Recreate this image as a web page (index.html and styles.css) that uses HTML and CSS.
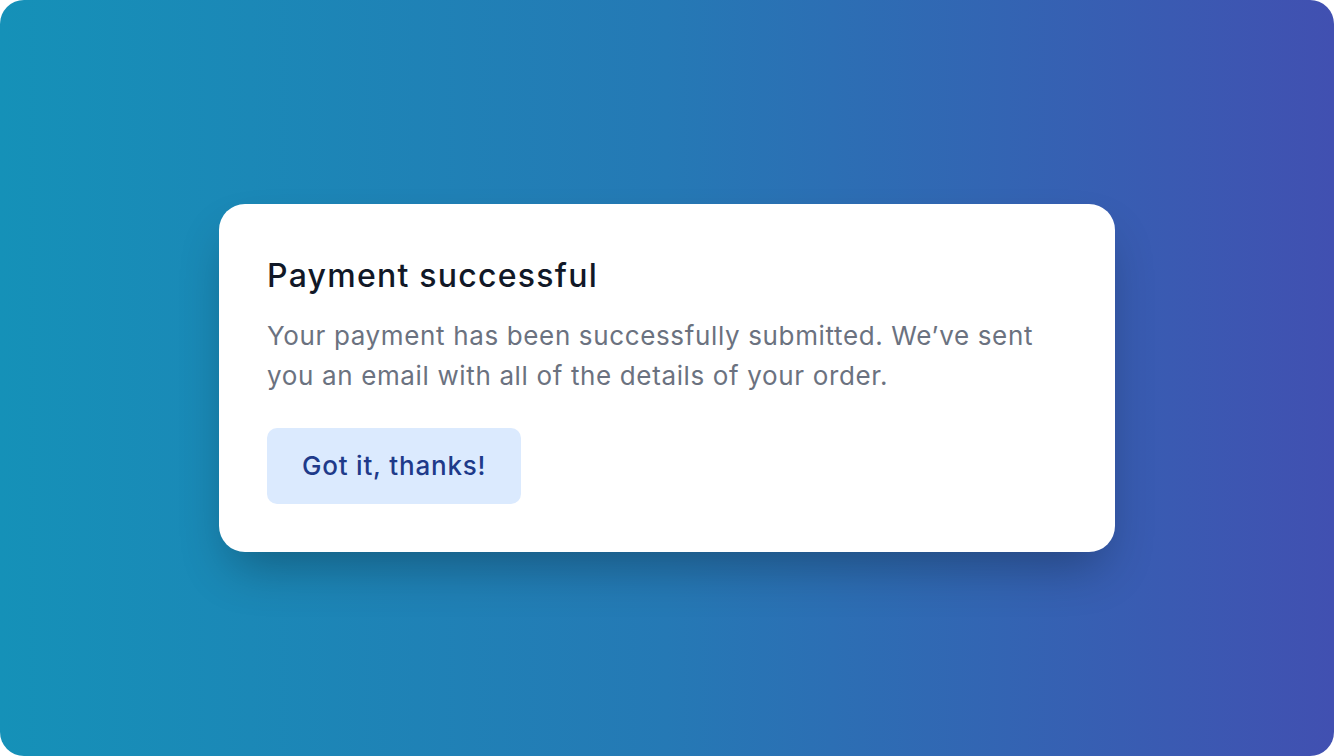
FILE: index.html
```html
<!DOCTYPE html>
<html lang="en">
<head>
<meta charset="utf-8">
<title>Payment successful</title>
<link rel="stylesheet" href="styles.css">
</head>
<body>
<div class="stage">
  <div class="card">
    <h1 class="title">Payment successful</h1>
    <p class="message">Your payment has been successfully submitted. We’ve sent you an email with all of the details of your order.</p>
    <div class="actions">
      <button class="btn" type="button">Got it, thanks!</button>
    </div>
  </div>
</div>
</body>
</html>
```

FILE: styles.css
```css
* { box-sizing: border-box; }
html, body {
  margin: 0;
  padding: 0;
  background: #ffffff;
}
body {
  font-family: Inter, "Noto Sans", "Liberation Sans", sans-serif;
  -webkit-font-smoothing: antialiased;
}
.stage {
  width: 1334px;
  height: 756px;
  border-radius: 24px;
  background: linear-gradient(to right, #1591b8 0%, #2579b5 50%, #4150b1 100%);
  display: flex;
  align-items: center;
  justify-content: center;
  overflow: hidden;
}
.card {
  width: 896px;
  background: #ffffff;
  border-radius: 26px;
  padding: 48px;
  box-shadow: 0 25px 50px -12px rgba(0, 0, 0, 0.3);
}
.title {
  margin: 0;
  font-size: 32px;
  line-height: 48px;
  font-weight: 500;
  color: #111827;
  letter-spacing: 1.25px;
}
.message {
  margin: 16px 0 0;
  font-size: 26px;
  line-height: 40px;
  color: #6b7280;
  font-weight: 400;
  letter-spacing: 0.64px;
}
.actions {
  margin-top: 32px;
  display: flex;
}
.btn {
  font-family: inherit;
  font-size: 26px;
  line-height: 36px;
  font-weight: 500;
  color: #1e3a8a;
  background: #dbeafe;
  border: none;
  border-radius: 10px;
  padding: 20px 35px;
  letter-spacing: 0.8px;
  cursor: pointer;
}
```
